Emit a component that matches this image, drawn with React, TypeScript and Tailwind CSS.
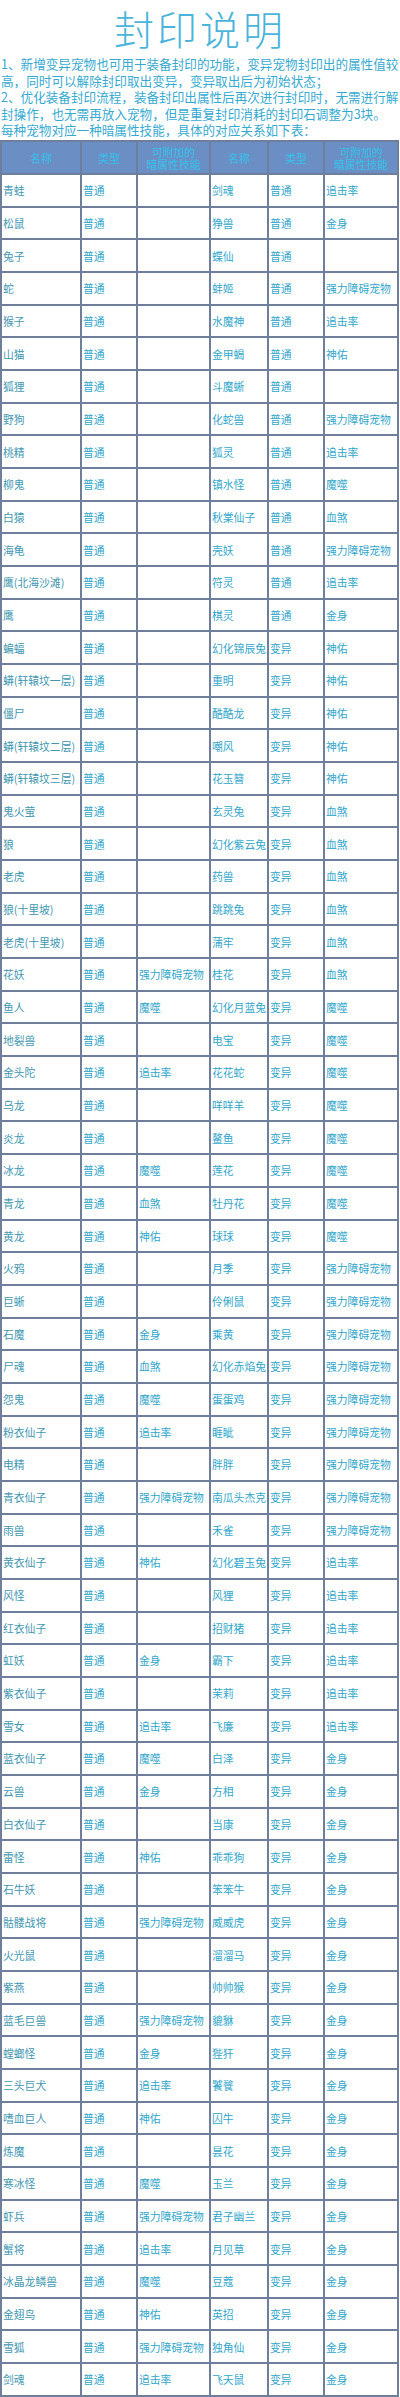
const FONT = { fontFamily: '"Noto Sans CJK SC", "Noto Sans", sans-serif' };

type Row = [string, string, string, string, string, string];

// 名称, 类型, 暗属性 | 名称, 类型, 暗属性
const ROWS: Row[] = [
  ['青蛙', '普通', '', '剑魂', '普通', '追击率'],
  ['松鼠', '普通', '', '狰兽', '普通', '金身'],
  ['兔子', '普通', '', '蝶仙', '普通', ''],
  ['蛇', '普通', '', '蚌姬', '普通', '强力障碍宠物'],
  ['猴子', '普通', '', '水魔神', '普通', '追击率'],
  ['山猫', '普通', '', '金甲蝎', '普通', '神佑'],
  ['狐狸', '普通', '', '斗魔蜥', '普通', ''],
  ['野狗', '普通', '', '化蛇兽', '普通', '强力障碍宠物'],
  ['桃精', '普通', '', '狐灵', '普通', '追击率'],
  ['柳鬼', '普通', '', '镇水怪', '普通', '魔噬'],
  ['白猿', '普通', '', '秋棠仙子', '普通', '血煞'],
  ['海龟', '普通', '', '壳妖', '普通', '强力障碍宠物'],
  ['鹰(北海沙滩)', '普通', '', '符灵', '普通', '追击率'],
  ['鹰', '普通', '', '棋灵', '普通', '金身'],
  ['蝙蝠', '普通', '', '幻化锦辰兔', '变异', '神佑'],
  ['蟒(轩辕坟一层)', '普通', '', '重明', '变异', '神佑'],
  ['僵尸', '普通', '', '酷酷龙', '变异', '神佑'],
  ['蟒(轩辕坟二层)', '普通', '', '嘲风', '变异', '神佑'],
  ['蟒(轩辕坟三层)', '普通', '', '花玉簪', '变异', '神佑'],
  ['鬼火萤', '普通', '', '玄灵兔', '变异', '血煞'],
  ['狼', '普通', '', '幻化紫云兔', '变异', '血煞'],
  ['老虎', '普通', '', '药兽', '变异', '血煞'],
  ['狼(十里坡)', '普通', '', '跳跳兔', '变异', '血煞'],
  ['老虎(十里坡)', '普通', '', '蒲牢', '变异', '血煞'],
  ['花妖', '普通', '强力障碍宠物', '桂花', '变异', '血煞'],
  ['鱼人', '普通', '魔噬', '幻化月蓝兔', '变异', '魔噬'],
  ['地裂兽', '普通', '', '电宝', '变异', '魔噬'],
  ['金头陀', '普通', '追击率', '花花蛇', '变异', '魔噬'],
  ['乌龙', '普通', '', '咩咩羊', '变异', '魔噬'],
  ['炎龙', '普通', '', '鳌鱼', '变异', '魔噬'],
  ['冰龙', '普通', '魔噬', '莲花', '变异', '魔噬'],
  ['青龙', '普通', '血煞', '牡丹花', '变异', '魔噬'],
  ['黄龙', '普通', '神佑', '球球', '变异', '魔噬'],
  ['火鸦', '普通', '', '月季', '变异', '强力障碍宠物'],
  ['巨蜥', '普通', '', '伶俐鼠', '变异', '强力障碍宠物'],
  ['石魔', '普通', '金身', '乘黄', '变异', '强力障碍宠物'],
  ['尸魂', '普通', '血煞', '幻化赤焰兔', '变异', '强力障碍宠物'],
  ['怨鬼', '普通', '魔噬', '蛋蛋鸡', '变异', '强力障碍宠物'],
  ['粉衣仙子', '普通', '追击率', '睚眦', '变异', '强力障碍宠物'],
  ['电精', '普通', '', '胖胖', '变异', '强力障碍宠物'],
  ['青衣仙子', '普通', '强力障碍宠物', '南瓜头杰克', '变异', '强力障碍宠物'],
  ['雨兽', '普通', '', '禾雀', '变异', '强力障碍宠物'],
  ['黄衣仙子', '普通', '神佑', '幻化碧玉兔', '变异', '追击率'],
  ['风怪', '普通', '', '风狸', '变异', '追击率'],
  ['红衣仙子', '普通', '', '招财猪', '变异', '追击率'],
  ['虹妖', '普通', '金身', '霸下', '变异', '追击率'],
  ['紫衣仙子', '普通', '', '茉莉', '变异', '追击率'],
  ['雪女', '普通', '追击率', '飞廉', '变异', '追击率'],
  ['蓝衣仙子', '普通', '魔噬', '白泽', '变异', '金身'],
  ['云兽', '普通', '金身', '方相', '变异', '金身'],
  ['白衣仙子', '普通', '', '当康', '变异', '金身'],
  ['雷怪', '普通', '神佑', '乖乖狗', '变异', '金身'],
  ['石牛妖', '普通', '', '笨笨牛', '变异', '金身'],
  ['骷髅战将', '普通', '强力障碍宠物', '威威虎', '变异', '金身'],
  ['火光鼠', '普通', '', '溜溜马', '变异', '金身'],
  ['紫燕', '普通', '', '帅帅猴', '变异', '金身'],
  ['蓝毛巨兽', '普通', '强力障碍宠物', '貔貅', '变异', '金身'],
  ['螳螂怪', '普通', '金身', '狴犴', '变异', '金身'],
  ['三头巨犬', '普通', '追击率', '饕餮', '变异', '金身'],
  ['嗜血巨人', '普通', '神佑', '囚牛', '变异', '金身'],
  ['炼魔', '普通', '', '昙花', '变异', '金身'],
  ['寒冰怪', '普通', '魔噬', '玉兰', '变异', '金身'],
  ['虾兵', '普通', '强力障碍宠物', '君子幽兰', '变异', '金身'],
  ['蟹将', '普通', '追击率', '月见草', '变异', '金身'],
  ['冰晶龙鳞兽', '普通', '魔噬', '豆蔻', '变异', '金身'],
  ['金翅鸟', '普通', '神佑', '英招', '变异', '金身'],
  ['雪狐', '普通', '强力障碍宠物', '独角仙', '变异', '金身'],
  ['剑魂', '普通', '追击率', '飞天鼠', '变异', '金身'],
];

const HEADERS = ['名称', '类型', '可附加的|暗属性技能', '名称', '类型', '可附加的|暗属性技能'];

export default function App() {
  return (
    <div className="w-[400px] bg-white" style={FONT}>
      {/* Title */}
      <h1 className="text-center text-[40px] font-light leading-[56px] tracking-[3px] text-[#4ab4da]">
        封印说明
      </h1>

      {/* Notes */}
      <div className="whitespace-nowrap pl-[1px] text-[12.6px] leading-[16.5px] text-[#36aad2]">
        <p>1、新增变异宠物也可用于装备封印的功能，变异宠物封印出的属性值较</p>
        <p>高，同时可以解除封印取出变异，变异取出后为初始状态；</p>
        <p>2、优化装备封印流程，装备封印出属性后再次进行封印时，无需进行解</p>
        <p>封操作，也无需再放入宠物，但是重复封印消耗的封印石调整为3块。</p>
        <p>每种宠物对应一种暗属性技能，具体的对应关系如下表：</p>
      </div>

      {/* Table */}
      <div className="mt-[1.5px] grid w-[399px] grid-cols-[78px_54px_71px_56px_54px_72px] gap-[2px] bg-[#6f7e9b] p-[2px] text-[10.8px]">
        {HEADERS.map((h, i) => (
          <div
            key={'h' + i}
            className="flex h-[31px] flex-col items-center justify-center bg-[#6b8ec4] text-center leading-[12px] text-[#31c3ec]"
          >
            {h.split('|').map((part) => (
              <span key={part}>{part}</span>
            ))}
          </div>
        ))}
        {ROWS.map((row, r) =>
          row.map((cell, c) => (
            <div
              key={r + '-' + c}
              className={`flex h-[30.68px] items-center overflow-hidden whitespace-nowrap bg-white pl-[1px] ${
                c === 0 ? 'text-[#4298b2]' : 'text-[#32a7cc]'
              }`}
            >
              {cell}
            </div>
          ))
        )}
      </div>
    </div>
  );
}
